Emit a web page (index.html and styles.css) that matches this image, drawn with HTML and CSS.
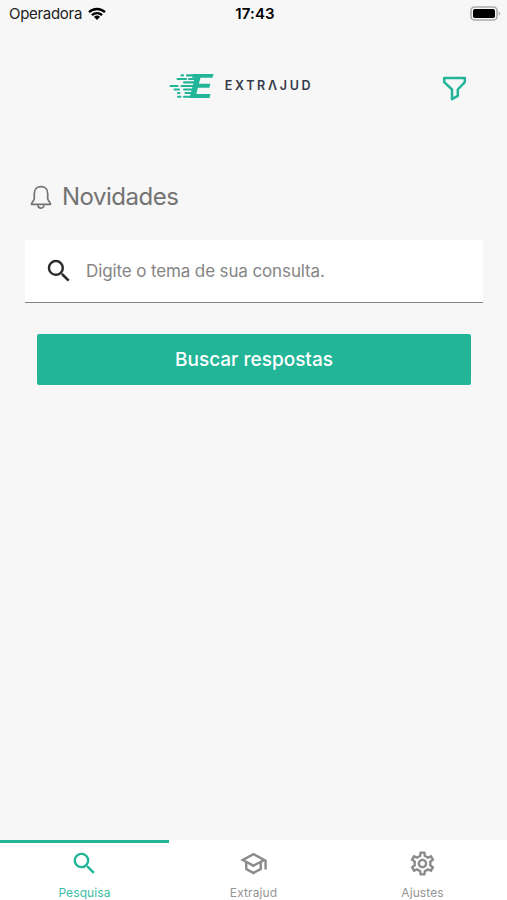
FILE: index.html
```html
<!doctype html>
<html lang="pt-BR">
<head>
    <meta charset="UTF-8">
    <meta name="viewport" content="width=device-width, initial-scale=1.0">
    <title>Extrajud</title>
    <link rel="stylesheet" href="styles.css">
</head>
<body>
    <div class="wrapper">
        <div class="status">
            <div class="carrier">
                <span>Operadora</span>
                <svg class="wifi" viewBox="0 0 18 13">
                    <path d="M1 5.2a11.6 11.6 0 0 1 16 0M3.9 8.1a7.4 7.4 0 0 1 10.2 0" fill="none" stroke="#000" stroke-width="2.3"/>
                    <path d="M5.9 9.8a4.6 4.6 0 0 1 6.2 0L9 13z"/>
                </svg>
            </div>
            <div class="time">17:43</div>
            <div class="power">
                <svg class="battery" viewBox="0 0 31 15">
                    <rect x="1" y="1" width="26" height="13" rx="3.6" fill="#f7f7f7" stroke="#aaa" stroke-width="1.6"/>
                    <rect x="3" y="3" width="22" height="9" rx="1.8"/>
                    <path d="M28.6 5.4c2 .8 2 3.4 0 4.2z" fill="#aaa"/>
                </svg>
            </div>
        </div>

        <div class="header">
            <div class="logo">
                <svg class="mark" viewBox="0 0 45 26">
                    <path d="M24 1h20.500l-1 3.800H31.500l-1.600 6h11.600l-1.100 3.900H28.900L27.300 21h14.200l-1 4H20.500l3.800-14.400 1.400-5.800H23z"/>
                    <path d="M12.500 2.400H14M18 2.400h8M8.500 6H17M20 6h6M15 9.400h10M1.500 13h7M12.500 13H25M5.500 16.500H10M15 16.500h9M9 20h1.500M16.500 20H23M9 23.700h2.500M15 23.700h7" fill="none" stroke-width="2.100" stroke-linecap="round"/>
                </svg>
                <span class="name" aria-label="EXTRAJUD">EXTRΛJUD</span>
            </div>
            <svg class="filter" viewBox="0 0 25 25">
                <path d="M2.2 2h20.6v4.2l-7 7.3v6.3l-5.800 3.400v-9.700l-7.800-7.300z"/>
            </svg>
        </div>

        <div class="container">
            <div class="news">
                <svg class="bell" viewBox="0 0 22 25">
                    <path d="M11 1.6c-4.300 0-6.700 3.200-6.700 6.800v5.200c0 2.200-2.800 3.600-2.800 5.700h19c0-2.100-2.800-3.500-2.800-5.700V8.400c0-3.600-2.400-6.800-6.700-6.800z"/>
                    <path d="M8 20.200a3 2.900 0 0 0 6 0"/>
                </svg>
                <span>Novidades</span>
            </div>
            <div class="search">
                <svg class="icon" viewBox="0 0 24 24"><path d="M15.5 14h-.79l-.28-.27A6.471 6.471 0 0 0 16 9.500 6.500 6.500 0 1 0 9.500 16c1.610 0 3.090-.59 4.230-1.570l.27.28v.79l5 4.990L20.490 19l-4.990-5zm-6 0C7.010 14 5 11.990 5 9.500S7.010 5 9.500 5 14 7.010 14 9.500 11.990 14 9.500 14z"/></svg>
                <span>Digite o tema de sua consulta.</span>
            </div>
            <div class="button">Buscar respostas</div>
        </div>

        <div class="tabs">
            <div class="tab active">
                <svg class="icon" viewBox="0 0 24 24"><path d="M15.5 14h-.79l-.28-.27A6.471 6.471 0 0 0 16 9.500 6.500 6.500 0 1 0 9.500 16c1.610 0 3.090-.59 4.230-1.570l.27.28v.79l5 4.990L20.490 19l-4.990-5zm-6 0C7.010 14 5 11.990 5 9.500S7.010 5 9.500 5 14 7.010 14 9.500 11.990 14 9.500 14z"/></svg>
                <span>Pesquisa</span>
            </div>
            <div class="tab">
                <svg class="icon" viewBox="0 0 24 24"><path d="M12 3L1 9l4 2.180v6L12 21l7-3.820v-6l2-1.090V17h2V9L12 3zm6.820 6L12 12.720 5.180 9 12 5.280 18.820 9zM17 15.990l-5 2.730-5-2.730v-3.720L12 15l5-2.730v3.720z"/></svg>
                <span>Extrajud</span>
            </div>
            <div class="tab">
                <svg class="icon" viewBox="0 0 24 24"><path d="M19.43 12.98c.04-.32.07-.64.07-.98 0-.34-.03-.66-.07-.98l2.110-1.650c.19-.15.24-.42.12-.64l-2-3.460c-.09-.16-.26-.25-.44-.25-.06 0-.12.010-.17.030l-2.490 1c-.52-.4-1.080-.73-1.690-.98l-.38-2.650C14.460 2.180 14.250 2 14 2h-4c-.25 0-.46.18-.49.42l-.38 2.650c-.61.25-1.170.59-1.690.98l-2.490-1c-.06-.02-.12-.03-.18-.03-.17 0-.34.09-.43.25l-2 3.460c-.13.22-.07.49.12.64l2.110 1.650c-.04.32-.07.65-.07.98 0 .33.03.66.07.98l-2.110 1.650c-.19.15-.24.42-.12.64l2 3.460c.09.16.26.25.44.25.06 0 .12-.01.17-.03l2.490-1c.52.4 1.080.73 1.690.98l.38 2.650c.03.24.24.42.49.42h4c.25 0 .46-.18.49-.42l.38-2.650c.61-.25 1.170-.59 1.690-.98l2.490 1c.06.02.12.03.18.03.17 0 .34-.09.43-.25l2-3.460c.12-.22.07-.49-.12-.64l-2.110-1.650zm-1.980-1.710c.04.31.05.52.05.73 0 .21-.02.43-.05.73l-.14 1.130.89.7 1.080.84-.7 1.210-1.270-.51-1.040-.42-.9.68c-.43.32-.84.56-1.250.73l-1.060.43-.16 1.130-.2 1.350h-1.400l-.19-1.350-.16-1.130-1.060-.43c-.43-.18-.83-.41-1.230-.71l-.91-.7-1.060.43-1.270.51-.7-1.210 1.080-.84.89-.7-.14-1.130c-.03-.31-.05-.54-.05-.74s.02-.43.05-.73l.14-1.130-.89-.7-1.080-.84.7-1.210 1.270.51 1.040.42.9-.68c.43-.32.84-.56 1.250-.73l1.060-.43.16-1.130.2-1.350h1.390l.19 1.350.16 1.130 1.060.43c.43.18.83.41 1.230.71l.91.7 1.060-.43 1.270-.51.7 1.210-1.070.85-.89.7.14 1.130zM12 8c-2.210 0-4 1.790-4 4s1.790 4 4 4 4-1.790 4-4-1.790-4-4-4zm0 6c-1.100 0-2-.9-2-2s.9-2 2-2 2 .9 2 2-.9 2-2 2z"/></svg>
                <span>Ajustes</span>
            </div>
        </div>
    </div>
</body>
</html>
```

FILE: styles.css
```css
*{padding: 0;margin: 0;box-sizing: border-box}
body{
    background-color: #f7f7f7;
    font-family: Inter, "Liberation Sans", sans-serif;
}
svg{
    display: block;
    flex-shrink: 0;
}
.wrapper{
    display: flex;
    flex-direction: column;
    height: 900px;
}
.status{
    display: grid;
    grid-template-columns: 1fr auto 1fr;
    align-items: center;
    height: 26px;
    padding: 0 6px 0 9px;
    font-size: 15px;
}
.carrier{
    display: flex;
    align-items: center;
    gap: 6px;
    color: #222;
    letter-spacing: -.3px;
}
.wifi{
    width: 18px;
    height: 13px;
}
.time{
    font-weight: 600;
    letter-spacing: .1px;
}
.battery{
    width: 31px;
    height: 15px;
    margin-left: auto;
}
.header{
    display: grid;
    grid-template-columns: 1fr auto 1fr;
    align-items: center;
    height: 118px;
    padding: 1px 40px 0 15px;
}
.logo{
    display: flex;
    grid-column: 2;
    align-items: center;
    gap: 11px;
}
.mark{
    width: 45px;
    height: 26px;
    fill: #22b598;
    stroke: #22b598;
    stroke-width: 0;
}
.name{
    font-size: 12.5px;
    font-weight: 600;
    letter-spacing: 2.7px;
    color: #343a49;
}
.filter{
    width: 25px;
    height: 25px;
    margin: 6px 0 0 auto;
    fill: none;
    stroke: #22b598;
    stroke-width: 2.5;
    stroke-linejoin: round;
}
.container{
    flex: 1;
    padding: 38px 24px 0 25px;
}
.news{
    display: flex;
    align-items: center;
    gap: 10px;
    height: 30px;
    padding-left: 5px;
    font-size: 24px;
    letter-spacing: -.5px;
    color: #737373;
}
.news span{
    margin-top: -2px;
}
.bell{
    width: 22px;
    height: 25px;
    fill: none;
    stroke: #737373;
    stroke-width: 1.7;
    stroke-linejoin: round;
}
.search{
    display: flex;
    align-items: center;
    gap: 12px;
    height: 63px;
    margin-top: 28px;
    padding-left: 19px;
    background-color: #fff;
    border-bottom: 1px solid #858585;
    font-size: 17px;
    letter-spacing: -.12px;
    color: #858585;
}
.search .icon{
    width: 30px;
    height: 30px;
    fill: #2b2b2b;
}
.button{
    height: 51px;
    margin: 31px 12px 0;
    background-color: #22b598;
    border-radius: 2px;
    line-height: 51px;
    text-align: center;
    font-size: 19px;
    font-weight: 500;
    color: #fff;
}
.tabs{
    display: grid;
    grid-template-columns: repeat(3, 1fr);
    height: 60px;
    background-color: #fff;
}
.tab{
    display: flex;
    flex-direction: column;
    align-items: center;
    gap: 7px;
    padding-top: 6px;
    border-top: 3px solid transparent;
    font-size: 12px;
    line-height: 15px;
    letter-spacing: .1px;
    color: #949494;
}
.tab .icon{
    width: 29px;
    height: 29px;
    fill: #8b8b8b;
}
.tab.active{
    border-top-color: #22b598;
    color: #40bea5;
}
.tab.active .icon{
    fill: #22b598;
}
```
